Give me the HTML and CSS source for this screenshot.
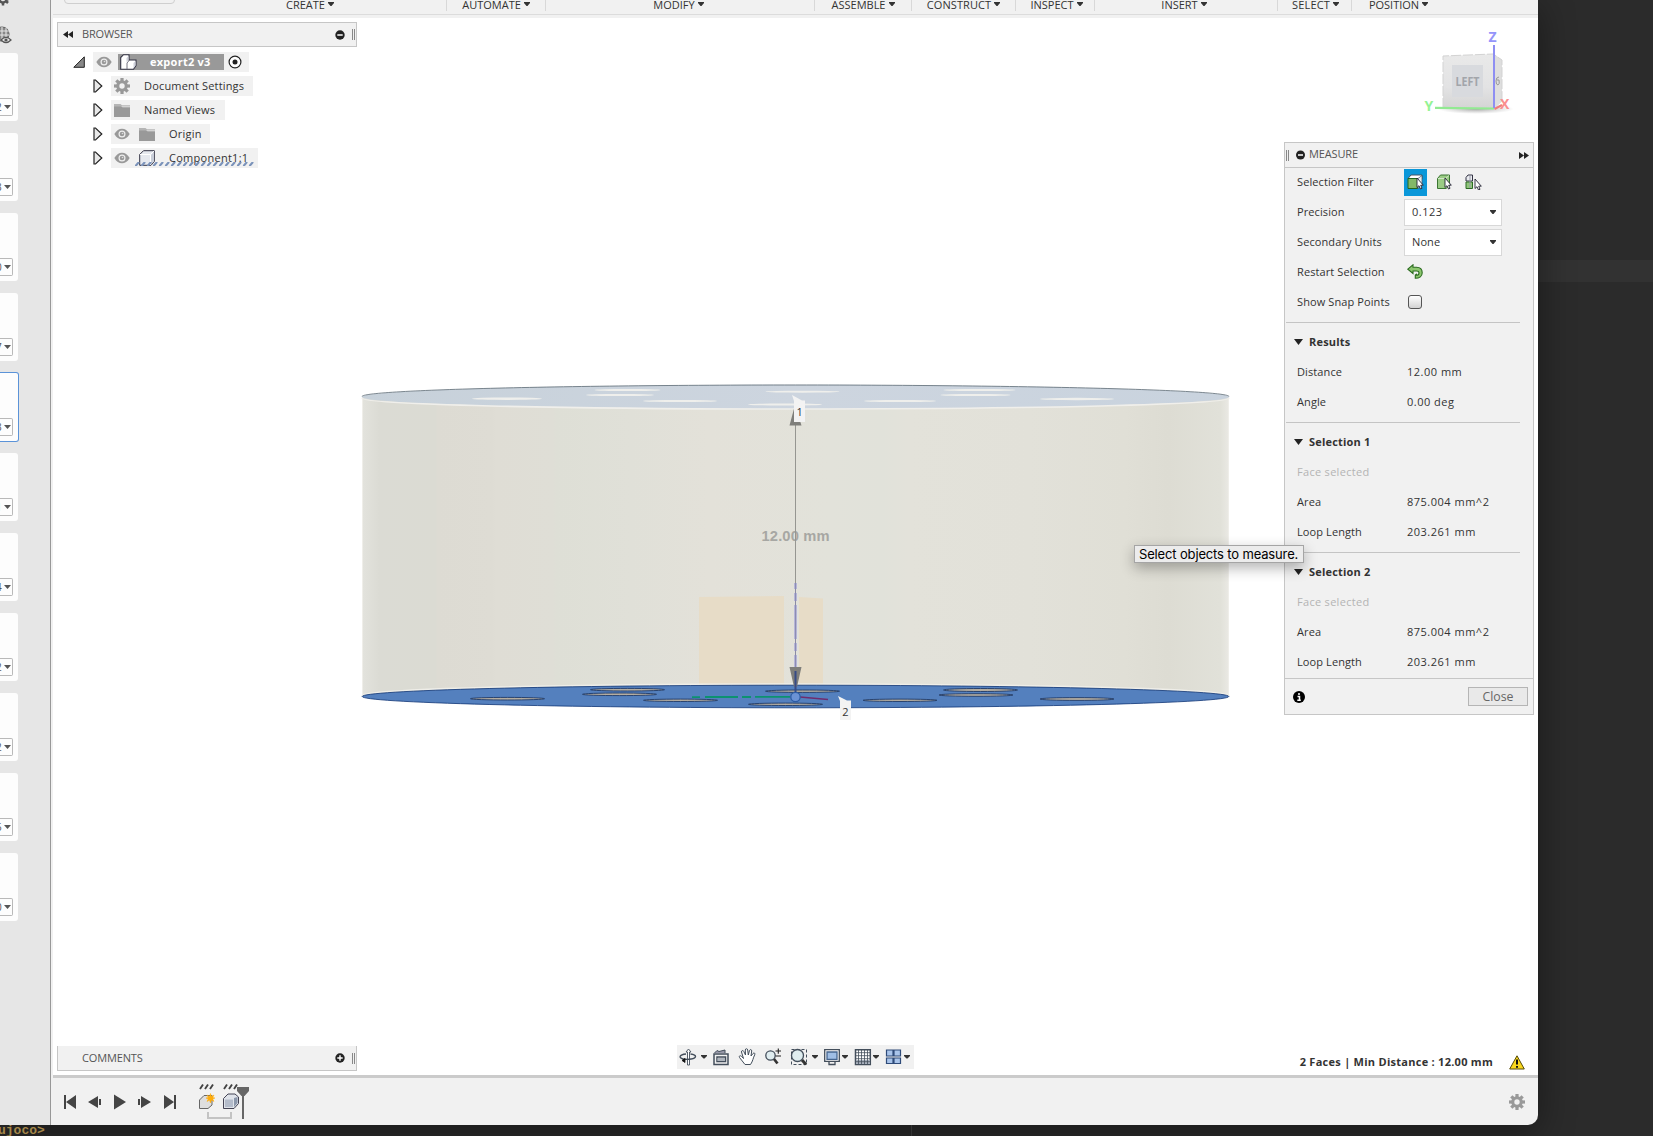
FILE: index.html
```html
<!DOCTYPE html>
<html lang="en">
<head>
<meta charset="utf-8">
<title>export2 v3</title>
<link rel="stylesheet" href="styles.css">
</head>
<body>
<svg class="defs" width="0" height="0" aria-hidden="true">
  <symbol id="eye" viewBox="0 0 16 12"><path d="M0.3 6C2.500 2.300 5 .7 8 .7S13.500 2.300 15.700 6C13.500 9.700 11 11.300 8 11.300S2.500 9.700.3 6Z" fill="#999"/><circle cx="8" cy="6" r="3.500" fill="#eee"/><circle cx="8" cy="6" r="2.300" fill="#999"/><circle cx="8.500" cy="5.500" r=".8" fill="#ddd"/></symbol>
  <symbol id="folder" viewBox="0 0 16 13"><path d="M0 0H6.500L8 1.300H16V2.500H0Z" fill="#b5b5b5"/><path d="M0 2.200H7L8.500 3.200H16V13H0Z" fill="#999"/></symbol>
  <symbol id="gear" viewBox="-8 -8 16 16"><g fill="#999"><path id="tooth" d="M-1.600-8H1.600V8H-1.600Z"/><use href="#tooth" transform="rotate(45)"/><use href="#tooth" transform="rotate(90)"/><use href="#tooth" transform="rotate(135)"/><circle r="5.800"/></g><circle r="2.700" fill="#f1f1f1"/></symbol>
  <symbol id="twist" viewBox="0 0 10 14"><path d="M1 1H2.500L8.800 7L2.500 13H1Z" fill="#e8e8e8" stroke="#222" stroke-width="1.200"/></symbol>
  <symbol id="caret" viewBox="0 0 6 4"><path d="M0 0H6V1L3.500 4H2.500L0 1Z" fill="#333"/></symbol>
  <symbol id="vercaret" viewBox="0 0 7 4"><path d="M0 0H7L3.500 4Z" fill="#555"/></symbol>
  <symbol id="section" viewBox="0 0 9 6"><path d="M0 0H9L4.500 6Z" fill="#222"/></symbol>
  <symbol id="cursor" viewBox="0 0 8 13"><path d="M1 1V10.500L3 8.700L4.500 12L6 11.300L4.700 8.200H7.300Z" fill="#fff" stroke="#223" stroke-width=".9"/></symbol>
</svg>

<div class="desktop">
  <div class="desktop-strip"></div>
  <div class="window">
    <aside class="datapanel">
      <div class="panel-icons">
        <svg width="14" height="46" viewBox="0 0 14 46"><g transform="translate(3 -1)" stroke="#555" stroke-width="2.500"><circle r="3.500" fill="none"/><path d="M0 3V6.500M3 2L5 4M-3 2L-5 4M3 0H6"/></g><g fill="none" stroke="#666" stroke-width="1.100"><circle cx="2" cy="34" r="7" fill="#888"/><path d="M-5 31H9M-5 35H9M2 27V40M6 28V38" stroke="#e6e6e6"/></g><path d="M1 40Q6 35 11 40Q6 45 1 40" fill="#e6e6e6" stroke="#555" stroke-width="1.200"/><circle cx="6" cy="40" r="1.600" fill="#555"/></svg>
      </div>
      <div class="card"><span class="ver">2<svg><use href="#vercaret"/></svg></span></div>
      <div class="card"><span class="ver">3<svg><use href="#vercaret"/></svg></span></div>
      <div class="card"><span class="ver">0<svg><use href="#vercaret"/></svg></span></div>
      <div class="card"><span class="ver">7<svg><use href="#vercaret"/></svg></span></div>
      <div class="card active"><span class="ver">3<svg><use href="#vercaret"/></svg></span></div>
      <div class="card"><span class="ver">1<svg><use href="#vercaret"/></svg></span></div>
      <div class="card"><span class="ver">4<svg><use href="#vercaret"/></svg></span></div>
      <div class="card"><span class="ver">2<svg><use href="#vercaret"/></svg></span></div>
      <div class="card"><span class="ver">2<svg><use href="#vercaret"/></svg></span></div>
      <div class="card"><span class="ver">5<svg><use href="#vercaret"/></svg></span></div>
      <div class="card"><span class="ver">0<svg><use href="#vercaret"/></svg></span></div>
    </aside>

    <main class="workspace">
      <header class="toolbar">
        <div class="workspace-switch"></div>
        <div class="group g-create">CREATE<svg><use href="#caret"/></svg></div>
        <div class="group g-automate">AUTOMATE<svg><use href="#caret"/></svg></div>
        <div class="group g-modify">MODIFY<svg><use href="#caret"/></svg></div>
        <div class="group g-assemble">ASSEMBLE<svg><use href="#caret"/></svg></div>
        <div class="group g-construct">CONSTRUCT<svg><use href="#caret"/></svg></div>
        <div class="group g-inspect">INSPECT<svg><use href="#caret"/></svg></div>
        <div class="group g-insert">INSERT<svg><use href="#caret"/></svg></div>
        <div class="group g-select">SELECT<svg><use href="#caret"/></svg></div>
        <div class="group g-position">POSITION<svg><use href="#caret"/></svg></div>
      </header>

      <section class="canvas">
        <svg class="scene" width="1485" height="1057" viewBox="53 18 1485 1057">
          <defs>
            <linearGradient id="wall" x1="362" x2="1229" y1="0" y2="0" gradientUnits="userSpaceOnUse">
              <stop offset="0" stop-color="#e3e3dd"/><stop offset=".02" stop-color="#dbdbd4"/><stop offset=".085" stop-color="#dbdbd3"/><stop offset=".087" stop-color="#dddbd3"/><stop offset=".15" stop-color="#dedcd4"/><stop offset=".155" stop-color="#dfddd5"/><stop offset=".22" stop-color="#dfded6"/><stop offset=".225" stop-color="#dedfd6"/><stop offset=".31" stop-color="#e0e0d8"/><stop offset=".4" stop-color="#e3e1d9"/><stop offset=".54" stop-color="#e2e2da"/><stop offset=".6" stop-color="#e1e2da"/><stop offset=".63" stop-color="#e3e2da"/><stop offset=".77" stop-color="#e2e1d9"/><stop offset=".88" stop-color="#e0dfd6"/><stop offset=".93" stop-color="#dddcd3"/><stop offset=".99" stop-color="#e1e1d9"/><stop offset="1" stop-color="#eae9e4"/>
            </linearGradient>
            <linearGradient id="lid" x1="0" x2="1"><stop offset="0" stop-color="#c7d1da"/><stop offset=".5" stop-color="#cdd5df"/><stop offset="1" stop-color="#c9d3de"/></linearGradient>
            <linearGradient id="cube" x1="0" x2="0" y1="0" y2="1"><stop offset="0" stop-color="#e9e9e9"/><stop offset=".6" stop-color="#e3e3e4"/><stop offset="1" stop-color="#d4d4d4"/></linearGradient>
            <radialGradient id="ground"><stop offset="0" stop-color="#888" stop-opacity=".75"/><stop offset="1" stop-color="#aaa" stop-opacity="0"/></radialGradient>
          </defs>

          <!-- cylinder wall and highlighted faces -->
          <path d="M362 397V697H1229V397Z" fill="url(#wall)"/>
          <path d="M362.500 397V697M1228.500 397V697" stroke="#efeee9"/>
          <path d="M699 597L784 596V690H699ZM799 597L823 598.500V690H799Z" fill="#e7dcc7"/>
          <ellipse cx="795.500" cy="397" rx="433.500" ry="12.200" fill="url(#lid)"/>
          <path d="M362 396.500C362 390 560 385 795.500 385S1229 390 1229 396.500" fill="none" stroke="#5d6b75" stroke-width=".8"/>
          <path d="M362 398C362 404.500 560 409 795.500 409S1229 404.500 1229 398" fill="none" stroke="#f0efeb" stroke-width="1.600"/>
          <g fill="#efefec">
            <ellipse cx="627.500" cy="390" rx="33" ry="1.100"/><ellipse cx="620" cy="395" rx="34" ry="1.100"/><ellipse cx="507" cy="398.700" rx="35" ry="1.200"/><ellipse cx="680" cy="401" rx="37" ry="1"/><ellipse cx="802.500" cy="391.700" rx="37" ry="1"/><ellipse cx="785" cy="404.500" rx="37" ry="1"/><ellipse cx="979.500" cy="390" rx="36" ry="1.100"/><ellipse cx="975.500" cy="395" rx="35" ry="1.100"/><ellipse cx="900" cy="401" rx="36" ry="1.100"/><ellipse cx="1077" cy="399" rx="37" ry="1.200"/>
          </g>
          <path d="M362 695.500C362 689 560 684 795.500 684S1229 689 1229 695.500" fill="none" stroke="#efeee8" stroke-width="1.600"/>
          <ellipse cx="795.500" cy="696.500" rx="433.300" ry="11.300" fill="#5480be" stroke="#0f3576" stroke-width=".8"/>
          <g fill="#b5ada0" stroke="#1f3a68" stroke-width=".9">
            <ellipse cx="627.500" cy="689.700" rx="37" ry="1.300"/><ellipse cx="619.500" cy="694.300" rx="37" ry="1.300"/><ellipse cx="507.500" cy="698.700" rx="37" ry="1.300"/><ellipse cx="680.500" cy="700.300" rx="37" ry="1.200"/><ellipse cx="802.500" cy="691.200" rx="37" ry="1.200"/><ellipse cx="785.500" cy="704.300" rx="37" ry="1.200"/><ellipse cx="980.500" cy="690" rx="37" ry="1.500"/><ellipse cx="976" cy="695" rx="37" ry="1.300"/><ellipse cx="900" cy="700.300" rx="37" ry="1.200"/><ellipse cx="1077" cy="699" rx="37" ry="1.400"/>
          </g>

          <!-- dimension and origin axes -->
          <text x="761.500" y="541" textLength="68" class="dim">12.00 mm</text>
          <path d="M795.500 425V668" stroke="#969691"/>
          <path d="M795.500 583V589M795.500 593V601M795.500 605V639M795.500 643V651M795.500 655V668" stroke="#a3a3d8" stroke-width="2.400"/>
          <path d="M795.500 583V668" stroke="#8888a8" stroke-width=".8"/>
          <path d="M795 405L789.500 425.500H801.500ZM789.500 667H801.500L797 687H794Z" fill="#7f7f7b"/>
          <path d="M795.500 671V694" stroke="#364b86" stroke-width="2"/>
          <path d="M692 697.200H700M705 697H738M742 697H751M755 696.800H790" stroke="#0c9270" stroke-width="1.800"/>
          <path d="M800 697L828 699.500" stroke="#702c6e" stroke-width="1.600"/>
          <circle cx="795.500" cy="697" r="4.700" fill="#6b92d5" stroke="#2d5ca4" stroke-width="1.300"/>
          <path d="M792 395L802 400.500H805V422H794V401Z" fill="#f3f3f3"/>
          <path d="M838 696L847 700.500H851V720H840V701Z" fill="#f3f3f3"/>
          <text x="796.500" y="415.500" class="flag">1</text>
          <text x="842.300" y="716" class="flag">2</text>

          <!-- view cube -->
          <ellipse cx="1476" cy="109" rx="38" ry="5" fill="url(#ground)"/>
          <path d="M1443 56L1493 54L1502 60V101L1494 109L1443 108Z" fill="url(#cube)"/>
          <path d="M1494 54L1502 60V101L1494 109Z" fill="#dedede"/>
          <path d="M1443 108V56L1493 54L1502 60V101" fill="none" stroke="#d3d3d3" stroke-dasharray="10 2"/>
          <path d="M1452 65H1483V97H1452Z" fill="#d8dade"/>
          <text x="1455.500" y="85.500" textLength="24" lengthAdjust="spacingAndGlyphs" class="cube-label">LEFT</text>
          <path d="M1499 77Q1496 77 1496 81T1498 85Q1500 84 1499 80H1497" fill="none" stroke="#999"/>
          <path d="M1435 107.800L1494 108.500" stroke="#92ea92" stroke-width="2.200"/>
          <path d="M1494.500 109L1502 105" stroke="#f07c7c" stroke-width="2.200"/>
          <path d="M1494 45V108" stroke="#8e8ef2" stroke-width="2"/>
          <text x="1488.500" y="41.500" class="axis z">Z</text>
          <text x="1424.500" y="111" class="axis y">Y</text>
          <text x="1500" y="108.500" class="axis x">X</text>
        </svg>

        <div class="browser">
          <div class="bar browser-bar">
            <svg class="collapse" width="10" height="7" viewBox="0 0 10 7"><path d="M5 0V7L0 3.500ZM10 0V7L5 3.500Z" fill="#222"/></svg>
            <span class="bar-title">BROWSER</span>
            <svg width="10" height="10" viewBox="0 0 10 10"><circle cx="5" cy="5" r="4.700" fill="#222"/><path d="M2.300 5H7.700" stroke="#fff" stroke-width="1.500"/></svg>
            <i class="grip"></i>
          </div>
          <ul class="tree">
            <li class="root">
              <svg class="open" width="12" height="12" viewBox="0 0 12 12"><path d="M11.300 .8V11.300H.8Z" fill="#888" stroke="#222"/></svg>
              <div class="node"><svg class="eye"><use href="#eye"/></svg>
                <span class="root-name"><svg width="17" height="16" viewBox="0 0 17 16"><path d="M.7 3.500L3.500 .7H9V6H16V11.500L13.500 15.300H.7Z" fill="#fff" stroke="#334" stroke-width="1.100"/><path d="M6.500 4L8.500 2V6L6.500 8ZM13.500 9L15.500 7V11.500L13.500 14.500Z" fill="#cdd0da"/><path d="M7 15V9L9.500 6" fill="none" stroke="#667" stroke-width=".9"/></svg><b>export2 v3</b></span>
                <svg width="14" height="14" viewBox="0 0 14 14"><circle cx="7" cy="7" r="5.900" fill="#fff" stroke="#222" stroke-width="1.200"/><circle cx="7" cy="7" r="2.500" fill="#222"/></svg></div>
            </li>
            <li><svg class="twist"><use href="#twist"/></svg><div class="node n-doc"><svg class="gear"><use href="#gear"/></svg><span>Document Settings</span></div></li>
            <li><svg class="twist"><use href="#twist"/></svg><div class="node n-views"><svg class="folder"><use href="#folder"/></svg><span>Named Views</span></div></li>
            <li><svg class="twist"><use href="#twist"/></svg><div class="node n-origin"><svg class="eye"><use href="#eye"/></svg><svg class="folder"><use href="#folder"/></svg><span>Origin</span></div></li>
            <li><svg class="twist"><use href="#twist"/></svg><div class="node n-comp"><svg class="eye"><use href="#eye"/></svg><svg class="box" width="16" height="16" viewBox="0 0 16 16"><path d="M.7 4.500L4.500 .7H15.300V11.500L12 15.300H.7Z" fill="#e6e9ef" stroke="#334"/><path d="M1 4.500H11.500V15M11.500 4.500L15 1" fill="none" stroke="#fff"/><path d="M12 5L15 2V11.500L12 14.500Z" fill="#c9ced9"/></svg><span>Component1:1</span>
              <svg class="hatch" width="119" height="4" viewBox="0 0 119 4"><path d="M1 3.500L3.500 .5M7 3.500L9.500 .5M13 3.500L15.500 .5M19 3.500L21.500 .5M25 3.500L27.500 .5M31 3.500L33.500 .5M37 3.500L39.500 .5M43 3.500L45.500 .5M49 3.500L51.500 .5M55 3.500L57.500 .5M61 3.500L63.500 .5M67 3.500L69.500 .5M73 3.500L75.500 .5M79 3.500L81.500 .5M85 3.500L87.500 .5M91 3.500L93.500 .5M97 3.500L99.500 .5M103 3.500L105.500 .5M109 3.500L111.500 .5M115 3.500L117.500 .5" stroke="#7b93ba" stroke-width="2.100" stroke-linecap="round"/></svg></div></li>
          </ul>
        </div>

        <div class="bar comments-bar">
          <span class="bar-title">COMMENTS</span>
          <svg width="10" height="10" viewBox="0 0 10 10"><circle cx="5" cy="5" r="4.700" fill="#222"/><path d="M2.300 5H7.700M5 2.300V7.700" stroke="#fff" stroke-width="1.400"/></svg>
          <i class="grip"></i>
        </div>

        <nav class="navbar">
          <svg width="237" height="24" viewBox="677 1045 237 24">
            <g fill="none" stroke="#434e5b" stroke-width="1.300">
              <path d="M687.500 1065V1052H686L688.500 1049L691 1052H689.500V1065Z" fill="#fff" stroke-width=".9"/>
              <path d="M686 1054C679 1054.500 678.500 1058 683 1059C688 1060 695.500 1059 695.500 1056.500C695.500 1054.700 692 1054.200 690.500 1054" stroke-width="1.400"/>
              <path d="M682 1060.500L685 1058.500V1062.500Z" fill="#111" stroke="#111" stroke-width=".8"/>
              <path d="M714 1054H728V1064.500H714ZM717 1057H725.500V1061.500H717Z" stroke-width="1.500"/><path d="M717.500 1058H725V1061H717.500Z" fill="#aeb4bc" stroke="none"/><path d="M714.500 1053L717 1050.500L719 1051.500L725 1050V1053" fill="#99a" stroke-width="1"/>
              <path d="M745 1064.500L739.500 1057.500C738.500 1056 740.500 1055 741.700 1056.500L743.500 1058.500L741.500 1052C741.300 1050.300 743.300 1050 743.800 1051.500L745.500 1055L745.300 1050C745.300 1048.300 747.500 1048.300 747.700 1050L748.300 1055L749.500 1050.500C750 1049 752 1049.500 751.700 1051L751 1056L753 1053.500C754 1052.300 755.500 1053.300 754.700 1054.800C753 1058 753 1061 750.500 1064.500Z" fill="#fff" stroke-width="1"/>
              <circle cx="770.500" cy="1055.500" r="4.700" fill="#e0edf0"/><path d="M774 1059L777.500 1063.500" stroke="#333" stroke-width="2.700"/><path d="M775.500 1051H781M778.300 1048.500V1053.700M775.500 1056H781" stroke="#222" stroke-width="1.100"/>
              <path d="M791.500 1049.500H806.500V1064.500H791.500Z" stroke-dasharray="3 2" stroke-width="1"/><circle cx="797.500" cy="1055.500" r="6" fill="#dfedef"/><path d="M802 1060L806 1064.500" stroke="#333" stroke-width="3"/>
              <path d="M824.700 1049.700H839.300V1061.300H824.700Z" fill="#fff"/><path d="M827 1052H837V1059.300H827Z" fill="#9fbee5" stroke="#45658f"/><path d="M829 1062V1064.500H835V1062" stroke-width="1.300"/>
              <path d="M855.500 1049.700H870.300V1064.500H855.500Z" fill="#fff" stroke-width="1.500"/><path d="M856 1060H870V1064H856Z" fill="#a8b0bd" stroke="none"/><path d="M858.500 1050V1064M861.500 1050V1064M864.500 1050V1064M867.500 1050V1064M856 1052.700H870M856 1055.700H870M856 1058.700H870M856 1061.700H870" stroke-width=".8"/>
              <path d="M886.500 1050H893V1056H886.500ZM894 1050H900.500V1056H894ZM886.500 1058H893V1063.500H886.500ZM894 1058H900.500V1063.500H894Z" fill="#a9c4ea" stroke="#2f4b79" stroke-width="1.200"/>
            </g>
            <g fill="#333"><path id="drop" d="M701 1055H707V1056L704.500 1058.500H703.500L701 1056Z"/><use href="#drop" x="111"/><use href="#drop" x="141"/><use href="#drop" x="172"/><use href="#drop" x="203"/></g>
          </svg>
        </nav>

        <div class="status"><b>2 Faces | Min Distance : 12.00 mm</b>
          <svg width="16" height="15" viewBox="0 0 16 15"><path d="M8 .8L15.300 14H.7Z" fill="#fbd81d" stroke="#554a08" stroke-linejoin="round"/><path d="M8 4.500V9.500M8 11V12.800" stroke="#111" stroke-width="2"/></svg>
        </div>

        <div class="measure">
          <div class="measure-head"><i class="grip"></i><svg width="9" height="10" viewBox="0 0 9 10"><circle cx="4.500" cy="5" r="4.500" fill="#222"/><path d="M2 5H7" stroke="#fff" stroke-width="1.500"/></svg><span>MEASURE</span><svg class="expand" width="10" height="7" viewBox="0 0 10 7"><path d="M0 0L5 3.500L0 7ZM5 0L10 3.500L5 7Z" fill="#222"/></svg></div>
          <div class="block first">
            <div class="row"><label>Selection Filter</label>
              <div class="filters">
                <span class="on"><svg width="17" height="16" viewBox="0 0 17 16"><path d="M1 4.500L4 1H15V5M1 4.500H11" fill="#fff" stroke="#456"/><path d="M1 4.500H10.500V14.500H1Z" fill="#83b868" stroke="#25661c"/><path d="M11 4.500L15 1.500V11L11 14.500Z" fill="#e8eef2" stroke="#456" stroke-width=".7"/><use href="#cursor" x="9" y="3" width="8" height="13"/></svg></span>
                <span><svg width="17" height="16" viewBox="0 0 17 16"><path d="M1.500 4.500L4.500 1H13.500V11.500L10 14.500H1.500Z" fill="#9acb85" stroke="#3b7532"/><path d="M2 4.500H9.500V14M9.500 4.500L13 1.500" fill="none" stroke="#d3e8c8"/><use href="#cursor" x="8" y="3" width="8" height="13"/></svg></span>
                <span><svg width="17" height="16" viewBox="0 0 17 16"><path d="M1 3.500L3 1H7.500V7H1Z" fill="#e9ebef" stroke="#334"/><path d="M1 8H7.500V14.500H1Z" fill="#8ec579" stroke="#2c6a24"/><path d="M5 2V14" stroke="#99a"/><use href="#cursor" x="9" y="4" width="8" height="13"/></svg></span>
              </div></div>
            <div class="row"><label>Precision</label><div class="select">0.123<svg><use href="#caret"/></svg></div></div>
            <div class="row"><label>Secondary Units</label><div class="select none">None<svg><use href="#caret"/></svg></div></div>
            <div class="row"><label>Restart Selection</label><svg class="restart" width="16" height="15" viewBox="0 0 16 15"><path d="M.8 5.200L6 .8V3.200H9.500C13 3.200 15.200 5.500 15.200 8.700C15.200 12 12.500 14.300 8.300 14.300V11L9.300 10.300V11.200C11 11.200 12 10.300 12 8.900C12 7.700 11 7 9.500 7H6V9.500Z" fill="#8cc66e" stroke="#2b6b1f" stroke-width="1.100"/></svg></div>
            <div class="row"><label>Show Snap Points</label><span class="check"></span></div>
          </div>
          <div class="block">
            <h3><svg><use href="#section"/></svg>Results</h3>
            <div class="row"><label>Distance</label><output>12.00 mm</output></div>
            <div class="row"><label>Angle</label><output>0.00 deg</output></div>
          </div>
          <div class="block">
            <h3><svg><use href="#section"/></svg>Selection 1</h3>
            <div class="row dim-row"><label>Face selected</label></div>
            <div class="row"><label>Area</label><output>875.004 mm^2</output></div>
            <div class="row"><label>Loop Length</label><output>203.261 mm</output></div>
          </div>
          <div class="block last">
            <h3><svg><use href="#section"/></svg>Selection 2</h3>
            <div class="row dim-row"><label>Face selected</label></div>
            <div class="row"><label>Area</label><output>875.004 mm^2</output></div>
            <div class="row"><label>Loop Length</label><output>203.261 mm</output></div>
          </div>
          <footer><svg width="12" height="12" viewBox="0 0 12 12"><circle cx="6" cy="6" r="6" fill="#000"/><path d="M6 2V4M4.500 5.500H6.500V9M4.300 9.200H7.800" stroke="#fff" stroke-width="1.500" fill="none"/></svg><button>Close</button></footer>
        </div>

        <div class="tooltip">Select objects to measure.</div>
      </section>

      <section class="timeline">
        <svg width="230" height="46" viewBox="53 1079 230 46">
          <g fill="#444"><path d="M64 1095H66V1109H64ZM76 1095V1109L66 1102Z"/><path d="M98 1096V1108L88 1102ZM99 1099H101V1105H99Z"/><path d="M114 1094.500L126 1102L114 1109.500Z"/><path d="M141 1096L151 1102L141 1108ZM138 1099H140V1105H138Z"/><path d="M164 1095L174 1102L164 1109ZM174 1095H176V1109H174Z"/></g>
          <path d="M200 1089L203 1084.500M205 1089L208 1084.500M210 1089L213 1084.500M224 1089L227 1084.500M229 1089L232 1084.500M234 1089L237 1084.500" stroke="#444" stroke-width="1.900"/>
          <path d="M199.500 1108.500V1100L204 1095.500H212V1105L208 1108.500Z" fill="#dedede" stroke="#666"/>
          <path d="M210.500 1093.500L211.500 1096.500L214 1095L212.700 1097.500L215 1098L212.700 1099L214 1101.500L211.500 1100L210.500 1103L209.500 1100L207 1101.500L208.300 1099L206 1098L208.300 1097.500L207 1095L209.500 1096.500Z" fill="#ffac0a" stroke="#ffac0a" stroke-width=".5"/>
          <path d="M223.500 1108.500V1098.500L228 1094H235L238.500 1097V1103.500L234 1108.500Z" fill="#dfe3ea" stroke="#445"/><path d="M225 1107V1099.500H233V1107Z" fill="#b4bccb"/><path d="M234 1098L237.500 1097V1103L234 1107Z" fill="#8b97ab"/>
          <path d="M208 1112V1118H231V1112" fill="none" stroke="#c3c3c3" stroke-width="2"/>
          <path d="M237 1087H249V1091L244.500 1096H244V1119H242V1096H241.500L237 1091Z" fill="#666"/>
        </svg>
        <svg class="gear"><use href="#gear"/></svg>
      </section>
    </main>
  </div>
  <div class="terminal"><span>ujoco&gt;</span><i></i></div>
</div>
</body>
</html>
```

FILE: styles.css
```css
* { box-sizing: border-box; }
body { margin: 0; overflow: hidden; background: #2b2b2b; font: 11px/20px "Open Sans", "Noto Sans", sans-serif; color: #333; }
svg { flex: none; display: block; }
.defs { position: absolute; }
.desktop { position: relative; width: 1653px; height: 1136px; overflow: hidden; background: #2b2b2b; }
.desktop-strip { position: absolute; top: 260px; left: 1538px; right: 0; height: 22px; background: #323232; }
.window { position: relative; z-index: 1; display: flex; width: 1538px; height: 1125px; overflow: hidden; background: #f1f1f1; border-radius: 0 0 10px 0; box-shadow: 0 8px 36px rgba(0, 0, 0, .42); }
.terminal { position: relative; z-index: 2; display: flex; height: 11px; overflow: hidden; font: bold 13px/13px "Liberation Mono", monospace; color: #a58749; }
.terminal span { width: 913px; margin: -1px 0 0 -2px; }
.terminal i { width: 1px; height: 11px; background: #333; }

.datapanel { width: 51px; flex: none; display: flex; flex-direction: column; gap: 12px; background: #e6e6e6; border-right: 1px solid #989898; }
.panel-icons { height: 41px; overflow: visible; }
.card { flex: none; width: 18px; height: 68px; display: flex; align-items: flex-end; padding-bottom: 5px; background: #fdfdfd; border-radius: 0 3px 3px 0; }
.card.active { width: 19px; height: 70px; margin: -1px 0; border: 1px solid #5b93d8; border-left: 0; }
.ver { display: flex; align-items: center; gap: 2px; width: 13px; height: 18px; border: 1px solid #b9b9b9; border-left: 0; border-radius: 0 2px 2px 0; font-size: 10px; text-indent: -4px; color: #555; }
.ver svg { width: 7px; height: 4px; }

.workspace { flex: 1; display: flex; flex-direction: column; padding-left: 2px; }
.toolbar { flex: none; height: 18px; display: flex; overflow: hidden; background: linear-gradient(#f1f1f1 14px, #dcdcdc 14px, #dcdcdc 15px, #f1f1f1 15px); }
.workspace-switch { width: 111px; height: 14px; margin: -10px 9px 0 11px; border: 1px solid #cfcfcf; border-radius: 4px; }
.group { flex: none; height: 11px; display: flex; justify-content: center; gap: 3px; border-right: 1px solid #d8d8d8; line-height: 9px; white-space: nowrap; }
.group svg { width: 6px; height: 4px; margin-top: 2px; }
.g-create { width: 263px; padding-right: 10px; }
.g-automate { width: 99px; }
.g-modify { width: 269px; padding-right: 3px; }
.g-assemble { width: 97px; }
.g-construct { width: 104px; letter-spacing: .1px; }
.g-inspect { width: 79px; padding-left: 3px; }
.g-insert { width: 183px; padding-right: 4px; }
.g-select { width: 74px; letter-spacing: .2px; padding-left: 2px; }
.g-position { width: 94px; border: 0; padding-right: 1px; }

.canvas { position: relative; flex: none; height: 1057px; background: #fff; }
.dim { font: bold 14.700px "Liberation Sans", sans-serif; fill: #a7a7a3; }
.flag { font: 11px "Open Sans", sans-serif; fill: #333; }
.cube-label { font: bold 13px "Open Sans", sans-serif; fill: #a2a5aa; }
.axis { font: bold 14px "Open Sans", sans-serif; }
.z { fill: #9595fa; }
.y { fill: #94f394; }
.x { fill: #fa8f8f; }

.bar { width: 300px; height: 25px; display: flex; align-items: center; padding-right: 1px; background: #f1f1f1; border: 1px solid #c6c6c6; color: #555; }
.bar-title { margin-right: auto; letter-spacing: -.15px; }
.browser-bar .bar-title { padding-bottom: 2px; }
.grip { width: 3px; height: 11px; margin-left: 7px; border: solid #888; border-width: 0 1px; }
.browser { position: absolute; left: 4px; top: 4px; }
.collapse { margin: 0 9px 0 5px; }
.tree { list-style: none; margin: 5px 0 0; padding: 0; }
.tree li { display: flex; align-items: center; height: 20px; margin-bottom: 4px; padding-left: 36px; }
.tree .root { padding-left: 16px; }
.open { margin-right: 8px; }
.node { position: relative; display: flex; align-items: center; height: 20px; padding-left: 3px; background: #f1f1f1; letter-spacing: .14px; white-space: nowrap; }
.root .node { width: 156px; gap: 4px; }
.root-name { display: flex; align-items: center; width: 106px; height: 16px; margin-left: 2px; padding-left: 2px; background: #999; color: #fff; letter-spacing: .25px; }
.root-name b { margin-left: 13px; }
.twist { width: 10px; height: 14px; margin-right: 8px; }
.eye { width: 16px; height: 12px; }
.gear { width: 16px; height: 16px; }
.folder { width: 16px; height: 13px; }
.node span:not(.root-name) { margin-left: 14px; }
.eye + .folder, .eye + .box { margin-left: 9px; }
.n-doc { width: 142px; letter-spacing: .17px; }
.n-views { width: 114px; }
.n-origin { width: 99px; letter-spacing: .25px; }
.n-comp { width: 147px; letter-spacing: .27px; }
.hatch { position: absolute; left: 24px; top: 14px; }
.comments-bar { position: absolute; left: 4px; bottom: 4px; padding-left: 24px; border-top: 0; }
.navbar { position: absolute; left: 624px; top: 1027px; background: #f1f1f1; }
.status { position: absolute; right: 13px; top: 1034px; display: flex; align-items: center; gap: 16px; letter-spacing: .27px; }

.measure { position: absolute; left: 1231px; top: 124px; width: 250px; height: 573px; background: #f1f1f1; border: 1px solid #c6c6c6; }
.measure-head { height: 25px; display: flex; align-items: center; gap: 4px; padding: 0 4px 0 1px; border-bottom: 1px solid #c6c6c6; color: #555; letter-spacing: -.15px; }
.measure-head span { padding-bottom: 2px; }
.measure-head .grip { margin: 0 3px 0 0; }
.measure-head .expand { margin-left: auto; }
.block { margin: 0 13px 0 1px; padding: 4px 0 5px 11px; border-bottom: 1px solid #c4c4c4; }
.block.first { padding-top: 0; margin-top: -1px; }
.block.last { border: 0; padding-bottom: 1px; }
.row { height: 30px; display: flex; align-items: center; }
.row label { width: 111px; letter-spacing: .1px; }
.row output { margin-left: -1px; letter-spacing: .5px; }
.dim-row { color: #b4b4b4; }
.dim-row label { letter-spacing: .3px; }
.block h3 { display: flex; align-items: center; gap: 6px; height: 30px; margin: 0 0 0 -3px; font-size: 11px; letter-spacing: .2px; }
.block h3 svg { width: 9px; height: 6px; }
.filters { display: flex; margin-left: -4px; gap: 6px; }
.filters span { display: flex; align-items: center; justify-content: center; width: 23px; height: 27px; }
.filters .on { background: #0a97d9; }
.select { display: flex; align-items: center; justify-content: space-between; width: 98px; height: 27px; margin-left: -4px; padding: 0 5px 0 7px; background: #fff; border: 1px solid #d8d8d8; letter-spacing: .5px; }
.select.none { letter-spacing: .1px; }
.select svg { width: 6px; height: 4px; }
.restart { margin: -1px 0 0 -1px; }
.check { width: 14px; height: 14px; margin-top: -1px; border: 1px solid #555; border-radius: 3px; background: linear-gradient(#fff, #d2d2d2); }
.measure footer { display: flex; align-items: center; justify-content: space-between; height: 36px; padding: 0 5px 0 8px; border-top: 1px solid #c6c6c6; }
.measure button { width: 60px; height: 19px; padding: 0; border: 1px solid #b5b5b5; background: #e9e9e9; color: #666; font: 12.300px/15px "Open Sans", sans-serif; }
.tooltip { position: absolute; left: 1081px; top: 527px; width: 170px; height: 18px; padding-left: 4px; background: #ececec; border: 1px solid #a5a5a5; color: #000; font: 13px/17px Inter, sans-serif; letter-spacing: -.15px; white-space: nowrap; box-shadow: 0 5px 14px rgba(0, 0, 0, .3); }

.timeline { flex: 1; display: flex; align-items: center; justify-content: space-between; padding-right: 13px; border-top: 3px solid #cbcbcb; }
```
